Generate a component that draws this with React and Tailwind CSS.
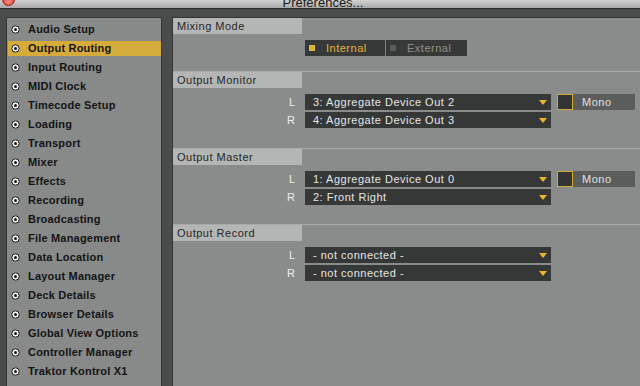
import React from 'react';

const NAV = [
  'Audio Setup',
  'Output Routing',
  'Input Routing',
  'MIDI Clock',
  'Timecode Setup',
  'Loading',
  'Transport',
  'Mixer',
  'Effects',
  'Recording',
  'Broadcasting',
  'File Management',
  'Data Location',
  'Layout Manager',
  'Deck Details',
  'Browser Details',
  'Global View Options',
  'Controller Manager',
  'Traktor Kontrol X1',
];

const SECTIONS = [
  { title: 'Output Monitor', l: '3: Aggregate Device Out 2', r: '4: Aggregate Device Out 3', mono: true, pad: 'pb-[20px]' },
  { title: 'Output Master', l: '1: Aggregate Device Out 0', r: '2: Front Right', mono: true, pad: 'pb-[19px]' },
  { title: 'Output Record', l: '- not connected -', r: '- not connected -', mono: false, pad: 'pb-[19px]' },
];

const Radio = () => (
  <svg width="9" height="9" viewBox="0 0 9 9" className="shrink-0">
    <circle cx="4.5" cy="4.5" r="3.7" fill="#f4f4f4" stroke="#1a1a1a" strokeWidth="1" />
    <circle cx="4.5" cy="4.5" r="1.5" fill="#1a1a1a" />
  </svg>
);

const Arrow = () => (
  <svg width="8" height="5" viewBox="0 0 8 5" className="shrink-0">
    <path d="M0 0 H8 L4 5 Z" fill="#e8b52e" />
  </svg>
);

const Header = ({ children }) => (
  <div className="h-[16px] w-[129px] bg-[#b4b6b5] pl-[4px] flex items-center text-[11px] tracking-[0.5px] text-[#262626]">
    {children}
  </div>
);

const Select = ({ label, value, mono }) => (
  <div className="flex items-center h-[16px]">
    <span className="w-[124px] pr-[2px] text-right text-[11px] text-[#eeeeee]">{label}</span>
    <div className="ml-[8px] w-[246px] h-full bg-[#363837] flex items-center justify-between pl-[8px] pr-[4px]">
      <span className="text-[11px] tracking-[0.5px] text-[#e6e6e6]">{value}</span>
      <Arrow />
    </div>
    {mono ? (
      <>
        <div className="ml-[6px] w-[16px] h-full border border-[#d6a92c] bg-[#333534]" />
        <div className="w-[62px] h-full bg-[#5b5d5c] pl-[9px] flex items-center text-[11px] tracking-[0.5px] text-[#e2e2e2]">Mono</div>
      </>
    ) : null}
  </div>
);

export default function App() {
  return (
    <div className="w-[640px] h-[386px] overflow-hidden bg-[#4a4c4b] flex flex-col" style={{ fontFamily: '"Liberation Sans", Arial, sans-serif' }}>
      {/* title bar, cut off at the top */}
      <div className="h-[9px] shrink-0 bg-gradient-to-b from-[#d2d2d2] to-[#a9a9a9] border-b border-[#2a2a2a] flex items-end relative overflow-hidden">
        <div className="absolute left-[2px] -top-[7px] w-[13px] h-[13px] rounded-full bg-[radial-gradient(circle_at_50%_70%,#ff8a80,#d0201a)] border border-[#8a1a14]" />
        <div className="w-full text-center text-[13px] leading-[13px] -mb-[1px] text-[#1a1a1a] pl-[6px]">Preferences...</div>
      </div>

      <div className="flex flex-1 pt-[8px] min-h-0">
        {/* sidebar */}
        <div className="ml-[6px] w-[156px] shrink-0 bg-[#878a89] border border-[#353736] border-b-0 pt-[4px] flex flex-col gap-[4px]">
          {NAV.map((item) => (
            <div
              key={item}
              className={`ml-px h-[15px] flex items-center gap-[8px] pl-[3px] ${item === 'Output Routing' ? 'bg-[#d5ab3a]' : ''}`}
            >
              <Radio />
              <span className="text-[11px] font-bold tracking-[0.2px] text-[#141414] whitespace-nowrap">{item}</span>
            </div>
          ))}
        </div>

        {/* settings */}
        <div className="ml-[10px] flex-1 bg-[#898c8b] border-l border-t border-[#353736] flex flex-col">
          <div className="h-[53px]">
            <Header>Mixing Mode</Header>
            <div className="mt-[6px] ml-[132px] flex h-[16px]">
              <div className="w-[80px] bg-[#373938] flex items-center pl-[4px] gap-[11px]">
                <div className="w-[6px] h-[6px] bg-[#e2b233]" />
                <span className="text-[11px] tracking-[0.5px] text-[#e5b534]">Internal</span>
              </div>
              <div className="w-px bg-[#7a7c7b]" />
              <div className="w-[81px] bg-[#373938] flex items-center pl-[4px] gap-[11px]">
                <div className="w-[6px] h-[6px] bg-[#5a5c5b]" />
                <span className="text-[11px] tracking-[0.5px] text-[#8e9190]">External</span>
              </div>
            </div>
          </div>

          {SECTIONS.map((s) => (
            <div key={s.title} className={`border-t border-[#a9abaa] ${s.pad}`}>
              <Header>{s.title}</Header>
              <div className="mt-[6px] flex flex-col gap-[2px]">
                <Select label="L" value={s.l} mono={s.mono} />
                <Select label="R" value={s.r} />
              </div>
            </div>
          ))}
        </div>
      </div>
    </div>
  );
}
